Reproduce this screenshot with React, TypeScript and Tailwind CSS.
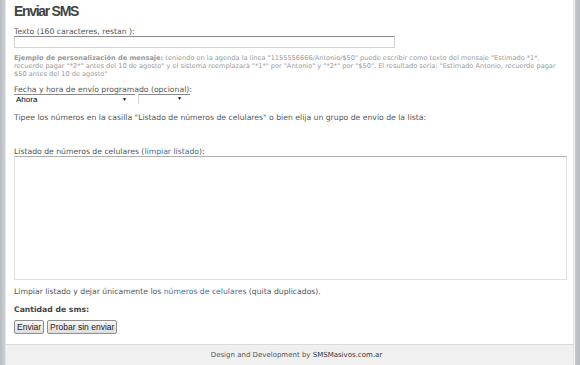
export default function App() {
  const verdana = { fontFamily: '"DejaVu Sans", Verdana, sans-serif' };
  return (
    <div className="w-[580px] h-[365px] flex bg-white overflow-hidden text-[#555]" style={verdana}>
      <div className="w-[5px] bg-gradient-to-r from-[#b9bdc1] to-[#cdd0d3]" />
      <div className="w-[1px] bg-[#e4e6e8]" />
      <div className="flex-1 flex flex-col min-w-0">
        <div className="flex-1 pl-[8px] pr-[6px]">
          <h1 className="mt-[3px] text-[14px] leading-[16px] font-bold tracking-[-1.3px] text-[#444] [font-family:'Liberation_Sans',Arial,sans-serif]">
            Enviar SMS
          </h1>
          <div className="mt-[8px] text-[7.7px] leading-[9px]">Texto (160 caracteres, restan ):</div>
          <div className="w-[381px] h-[12px] border border-[#d4d4d4] border-t-[#8a8a8a] bg-white" />
          <p className="mt-[7px] w-[556px] text-[6.6px] leading-[7.9px] text-[#999]">
            <b>Ejemplo de personalización de mensaje:</b> teniendo en la agenda la línea "1155556666/Antonio/$50" puede escribir como texto del mensaje "Estimado *1*, recuerde pagar "*2*" antes del 10 de agosto" y el sistema reemplazará "*1*" por "Antonio" y "*2*" por "$50". El resultado sería: "Estimado Antonio, recuerde pagar $50 antes del 10 de agosto"
          </p>
          <div className="mt-[6px] text-[7.7px] leading-[9px]">Fecha y hora de envío programado (opcional):</div>
          <div className="flex gap-[3px] [font-family:'Liberation_Sans',Arial,sans-serif] text-[8px] text-black">
            <div className="w-[121px] h-[10px] border-t border-[#8a8a8a] flex items-center justify-between pl-[2px] pr-[8px] leading-[9px]">
              <span>Ahora</span>
              <span className="text-[5px]">▼</span>
            </div>
            <div className="w-[52px] h-[10px] border-t border-[#8a8a8a] flex items-center justify-end pr-[8px] border-l border-l-[#d4d4d4]">
              <span className="text-[5px]">▼</span>
            </div>
          </div>
          <div className="mt-[9px] text-[7.7px] leading-[9px]">
            Tipee los números en la casilla "Listado de números de celulares" o bien elija un grupo de envío de la lista:
          </div>
          <div className="mt-[25px] text-[7.7px] leading-[9px]">
            Listado de números de celulares (<span className="text-[#3d6f9c]">limpiar listado</span>):
          </div>
          <div className="w-[553px] h-[124px] border border-[#e0e0e0] border-t-[#b0b0b0] bg-white" />
          <div className="mt-[7px] text-[7.7px] leading-[9px]">
            Limpiar listado y dejar únicamente los <span className="text-[#3d6f9c]">números de celulares</span> (quita duplicados).
          </div>
          <div className="mt-[9px] text-[7.7px] leading-[9px] font-bold text-[#444]">Cantidad de sms:</div>
          <div className="mt-[6px] flex gap-[3px] [font-family:'Liberation_Sans',Arial,sans-serif] text-[8.5px] text-[#222]">
            <button className="h-[14px] px-[2px] border border-[#8f8f8f] bg-gradient-to-b from-[#f6f6f6] to-[#dedede] rounded-[2px] leading-[12px]">Enviar</button>
            <button className="h-[14px] px-[2px] border border-[#8f8f8f] bg-gradient-to-b from-[#f6f6f6] to-[#dedede] rounded-[2px] leading-[12px]">Probar sin enviar</button>
          </div>
        </div>
        <footer className="h-[21px] border-t border-[#dadada] bg-[#f0f0f0] flex items-center justify-center pl-[14px] text-[7px] text-[#555]">
          Design and Development by&nbsp;<span className="text-[#333]">SMSMasivos.com.ar</span>
        </footer>
      </div>
      <div className="w-[1px] bg-[#e2e2e2]" />
      <div className="w-[1px] bg-[#f4f4f4]" />
      <div className="w-[5px] bg-gradient-to-r from-[#c5c8cb] to-[#b8bcc0]" />
    </div>
  );
}
